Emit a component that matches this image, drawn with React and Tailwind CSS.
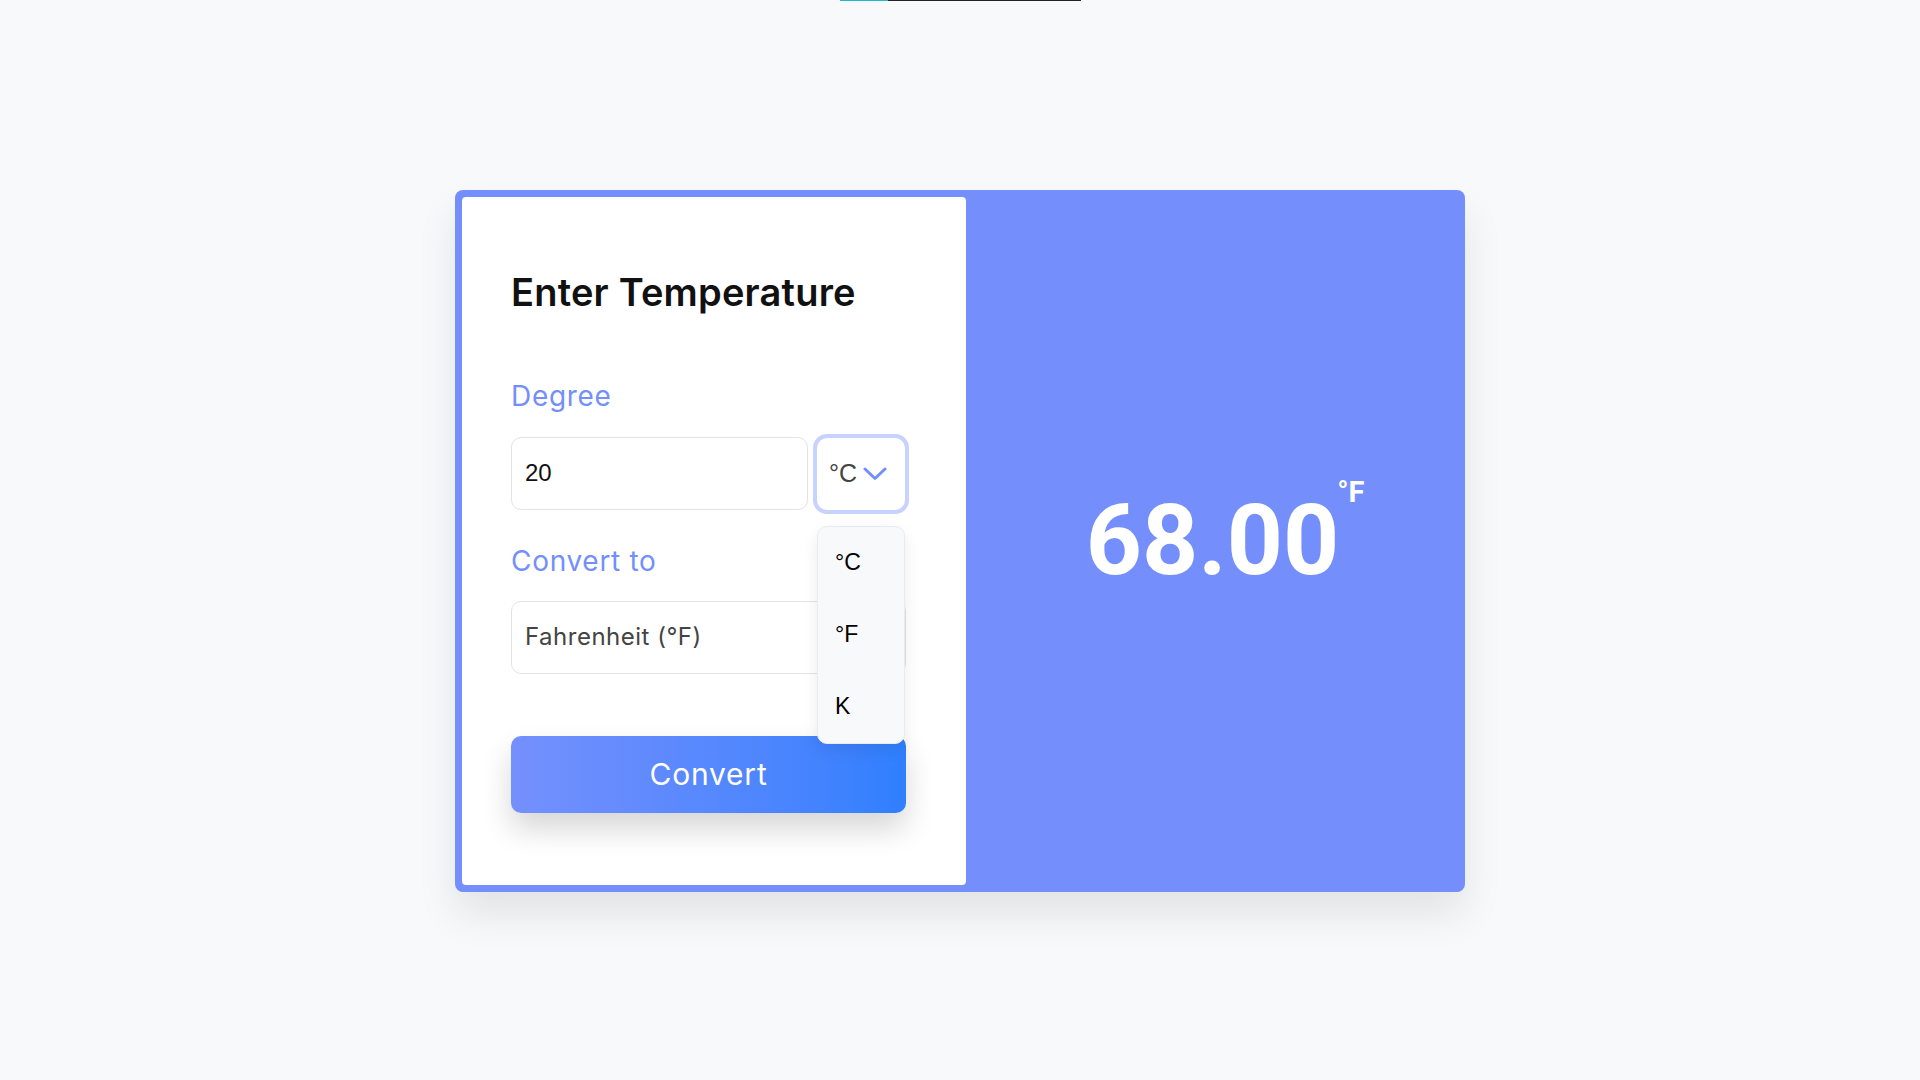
import { useState } from "react";

const UNITS = ["°C", "°F", "K"];

function Chevron() {
  return (
    <svg width="24" height="14" viewBox="0 0 24 14" fill="none">
      <polyline
        points="2,2 12,11.5 22,2"
        stroke="#748ffc"
        strokeWidth="3"
        strokeLinecap="round"
        strokeLinejoin="round"
      />
    </svg>
  );
}

export default function App() {
  const [degree, setDegree] = useState("20");
  const [unit, setUnit] = useState("°C");

  return (
    <div className="min-h-screen flex flex-col bg-[#f8f9fa]">
      <div className="flex justify-center">
        <div className="flex w-[241px] h-px">
          <div className="w-[48px] bg-[#22b8cf]" />
          <div className="flex-1 bg-[#212529]" />
        </div>
      </div>

      <div className="flex-1 flex items-center justify-center">
        <div className="flex w-[1010px] h-[702px] bg-[#748ffc] rounded-lg py-[7px] pl-[7px] shadow-[0_22px_40px_rgba(0,0,0,0.09)]">
          <div className="w-[504px] bg-white rounded-[4px] pl-[49px] pr-[60px] pt-[72px] font-['Inter',sans-serif]">
            <h2 className="text-[38px] leading-[46px] font-semibold text-[#111] tracking-[0.2px]">
              Enter Temperature
            </h2>

            <label className="block mt-[64px] text-[28px] leading-[34px] text-[#748ffc] tracking-[0.7px]">
              Degree
            </label>
            <div className="flex mt-[24px] gap-[9px]">
              <input
                value={degree}
                onChange={(e) => setDegree(e.target.value)}
                className="w-[297px] h-[73px] border border-[#e3e3e3] rounded-[10px] px-[13px] text-[24px] text-[#111] font-['Liberation_Sans',sans-serif] outline-none"
              />
              <div className="relative">
                <div className="w-[88px] h-[72px] mt-px rounded-[10px] bg-white ring-4 ring-[#c7d2fe] flex items-center pl-[12px] gap-[6px] font-['Liberation_Sans',sans-serif] text-[25px] text-[#444]">
                  <span>{unit}</span>
                  <Chevron />
                </div>
                <div className="absolute left-0 top-[89px] w-[88px] bg-[#f8f9fa] border border-[#e9ecef] rounded-[10px] shadow-[0_6px_16px_rgba(0,0,0,0.08)] z-10">
                  {UNITS.map((u) => (
                    <div
                      key={u}
                      onClick={() => setUnit(u)}
                      className="h-[72px] flex items-center pl-[17px] text-[23px] text-black font-['Liberation_Sans',sans-serif]"
                    >
                      {u}
                    </div>
                  ))}
                </div>
              </div>
            </div>

            <label className="block mt-[34px] text-[28px] leading-[34px] text-[#748ffc] tracking-[0.7px]">
              Convert to
            </label>
            <div className="mt-[23px] w-[395px] h-[73px] border border-[#e3e3e3] rounded-[10px] px-[13px] flex items-center text-[24px] text-[#444] tracking-[0.5px]">
              Fahrenheit (°F)
            </div>

            <button className="mt-[62px] w-[395px] h-[77px] rounded-[10px] bg-gradient-to-r from-[#7590fd] to-[#2f7ffe] text-white text-[30px] tracking-[0.8px] shadow-[0_16px_30px_rgba(0,0,0,0.16)]">
              Convert
            </button>
          </div>

          <div className="flex-1 flex items-center justify-center">
            <div className="relative mr-[6px] font-['Roboto',sans-serif] font-bold text-white">
              <span className="text-[98px] leading-none">68.00</span>
              <span className="absolute left-full top-[-14px] ml-[-2px] text-[29px] leading-none">
                °F
              </span>
            </div>
          </div>
        </div>
      </div>
    </div>
  );
}
